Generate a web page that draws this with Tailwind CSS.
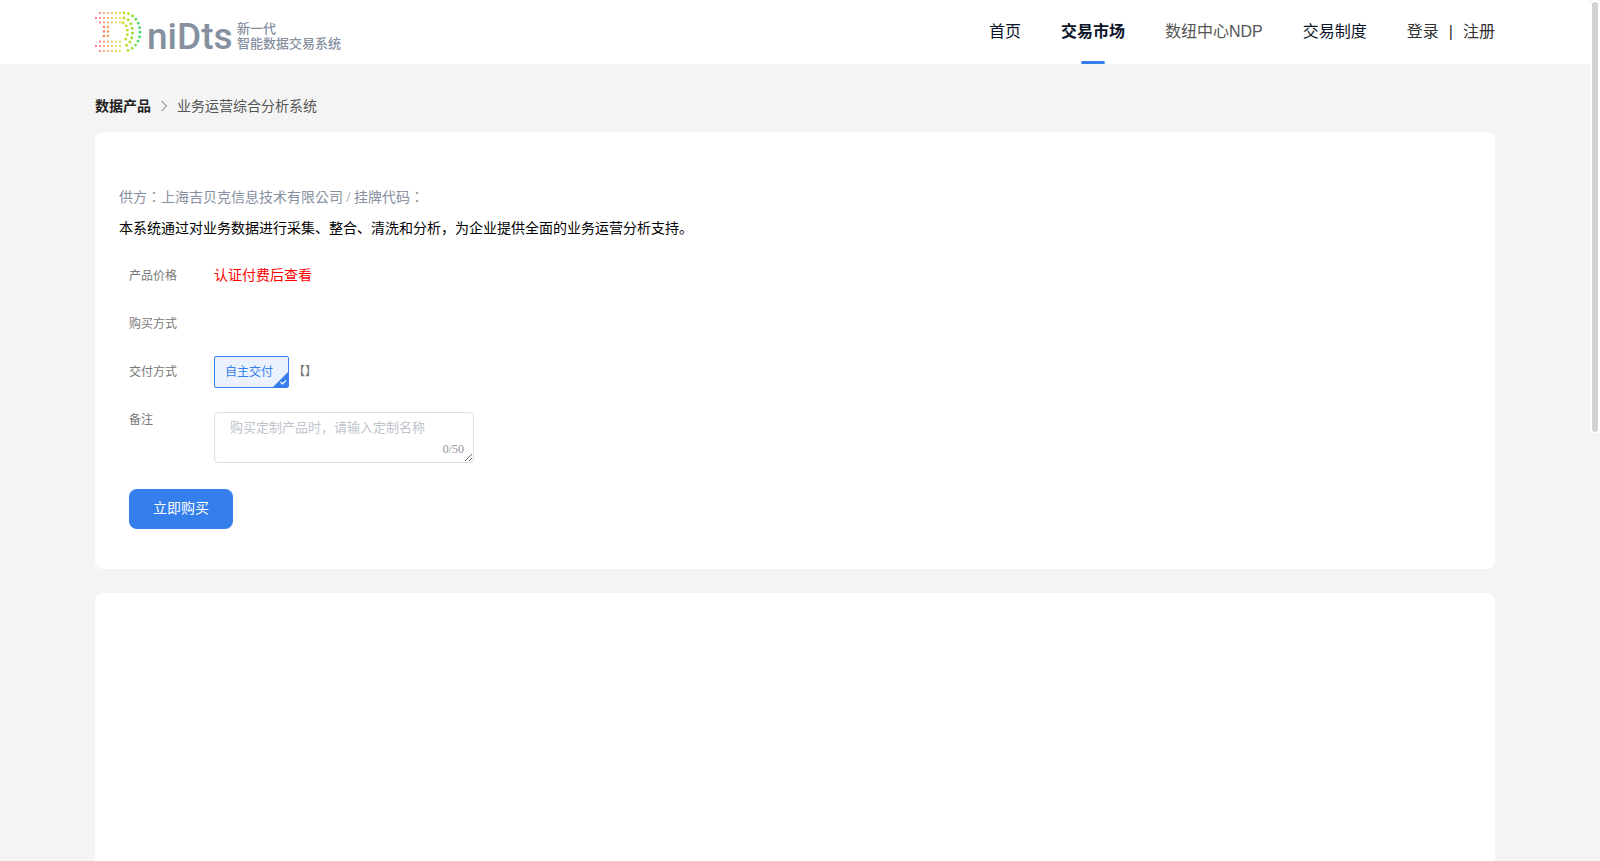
<!DOCTYPE html>
<html lang="zh-CN">

<head>
  <meta charset="UTF-8" />
  <meta name="viewport" content="width=device-width, initial-scale=1.0" />
  <title>业务运营综合分析系统</title>
  <script src="https://cdn.jsdelivr.net/npm/@tailwindcss/browser@4"></script>
</head>

<body class="flex h-screen overflow-hidden bg-[#f4f4f4]">
  <div id="page"
    class="h-full flex-1 overflow-y-auto font-['Liberation_Serif','Noto_Sans_CJK_SC',serif] [scrollbar-width:none] [text-spacing-trim:space-all]">
    <header class="bg-white font-['Liberation_Sans','Noto_Sans_CJK_SC',sans-serif]">
      <div class="mx-auto flex h-16 max-w-[1400px] items-center justify-between">
        <a href="#" aria-label="niDts">
          <svg class="h-16 w-[248px]" viewBox="95 0 248 64">
            <defs>
              <linearGradient id="rainbow" gradientUnits="userSpaceOnUse" x1="95" y1="0" x2="141" y2="0">
                <stop offset="0" stop-color="#ff3f6f" />
                <stop offset="0.2" stop-color="#fb855a" />
                <stop offset="0.45" stop-color="#ecd02f" />
                <stop offset="0.75" stop-color="#b5dc2c" />
                <stop offset="1" stop-color="#2fdc6c" />
              </linearGradient>
            </defs>
            <g fill="none" stroke="url(#rainbow)" stroke-linecap="round">
              <g stroke-width="2" stroke-dasharray="0 4">
                <path d="M100 13H121M100 51H121" />
                <path d="M96 18H121M96 46H121" />
                <path d="M100 22.500H121M100 41.500H121" />
              </g>
              <g stroke-width="2.600" stroke-dasharray="0 4.500">
                <path d="M104 27V37M108 27V37" />
              </g>
              <path d="M124 13A16 19 0 0 1 124 51" stroke-width="2.800" stroke-dasharray="0 4.600" />
              <path d="M124 18A8.500 14 0 0 1 124 46" stroke-width="3" stroke-dasharray="0 4.700" />
              <path d="M123 23A4.500 9 0 0 1 123 41" stroke-width="2.800" stroke-dasharray="0 4.500" />
            </g>
            <g fill="#86909f">
              <text x="147" y="49" font-size="37" font-weight="500" font-family="Roboto,sans-serif">niDts</text>
              <text x="237" y="33" font-size="13" font-weight="500" font-family="'Noto Sans CJK SC',sans-serif">新一代</text>
              <text x="237" y="48" font-size="13" font-weight="500" font-family="'Noto Sans CJK SC',sans-serif">智能数据交易系统</text>
            </g>
          </svg>
        </a>
        <nav class="flex h-full items-center gap-10 text-base text-[#0a1428]">
          <a href="#">首页</a>
          <a href="#" class="relative flex h-full items-center font-bold">交易市场
            <span class="absolute bottom-0 left-1/2 h-[3px] w-6 -translate-x-1/2 rounded-xs bg-[#347fec]"></span>
          </a>
          <a href="#" class="text-[#555]">数纽中心NDP</a>
          <a href="#">交易制度</a>
          <div class="flex gap-[10px] text-[#333]">
            <a href="#">登录</a>
            <span>|</span>
            <a href="#">注册</a>
          </div>
        </nav>
      </div>
    </header>

    <main class="mx-auto min-h-[1644px] max-w-[1400px] pt-[33px]">
      <nav class="flex items-center gap-[6px] text-sm leading-5">
        <a href="#" class="font-bold text-[#222]">数据产品</a>
        <svg class="size-[14px]" viewBox="0 0 14 14" fill="none" stroke="#666">
          <path d="M4.500 1L9.500 6L4.500 11" />
        </svg>
        <span class="text-[#555]">业务运营综合分析系统</span>
      </nav>

      <section class="mt-[15px] rounded-lg bg-white px-6 pt-14 pb-10">
        <p lang="zh-TW" class="font-['Liberation_Serif','Noto_Sans_CJK_TC',serif] text-sm leading-5 text-[#86909f]">供方：上海吉贝克信息技术有限公司 / 挂牌代码：</p>
        <p class="mt-[11px] text-sm leading-5 text-black">本系统通过对业务数据进行采集、整合、清洗和分析，为企业提供全面的业务运营分析支持。</p>

        <form class="mt-[21px] px-[10px] text-xs text-[#777]">
          <div class="flex h-8 items-center">
            <span class="w-[85px]">产品价格</span>
            <span class="text-sm text-[#ff0000]">认证付费后查看</span>
          </div>
          <div class="mt-4 flex h-8 items-center">
            <span class="w-[85px]">购买方式</span>
          </div>
          <div class="mt-4 flex h-8 items-center">
            <span class="w-[85px]">交付方式</span>
            <button type="button"
              class="relative h-8 rounded-xs border border-[#347fec] bg-[#ebf2fd] pr-[15px] pl-[10px] text-[#347fec]">自主交付
              <svg class="absolute right-0 bottom-0 size-[15px]" viewBox="0 0 15 15">
                <path d="M15 0V15H0Z" fill="#347fec" />
                <path d="M7.500 10L9.500 12L13 8.500" fill="none" stroke="#fff" stroke-width="1.200" />
              </svg>
            </button>
            <span class="ml-1">【】</span>
          </div>
          <div class="mt-6 flex">
            <label for="remark" class="w-[85px] leading-4">备注</label>
            <div class="relative">
              <textarea id="remark" maxlength="50" placeholder="购买定制产品时，请输入定制名称"
                class="block h-[51px] w-[260px] rounded-sm border border-[#dcdfe6] bg-white px-[15px] py-[5px] text-[13px] leading-5 text-[#606266] placeholder:text-[#c0c4cc]"></textarea>
              <span id="remark-count" class="absolute right-[10px] bottom-[6px] leading-4 text-[#909399]">0/50</span>
            </div>
          </div>
          <button type="submit" class="mt-[26px] h-10 rounded-lg bg-[#347fec] px-6 text-sm text-white">立即购买</button>
        </form>
      </section>

      <section class="mt-6 min-h-[600px] rounded-lg bg-white"></section>
    </main>
  </div>

  <div class="w-[10px]">
    <div id="thumb" class="h-[434px] rounded-full border-2 border-white bg-[#d2d2d2]"></div>
  </div>

  <script>
    const page = document.getElementById("page");
    const thumb = document.getElementById("thumb");
    const remark = document.getElementById("remark");
    const remarkCount = document.getElementById("remark-count");

    page.addEventListener("scroll", () => {
      const ratio = page.scrollTop / (page.scrollHeight - page.clientHeight);
      thumb.style.transform = `translateY(${ratio * (page.clientHeight - thumb.offsetHeight)}px)`;
    });

    remark.addEventListener("input", () => {
      remarkCount.textContent = `${remark.value.length}/50`;
    });
  </script>
</body>

</html>
